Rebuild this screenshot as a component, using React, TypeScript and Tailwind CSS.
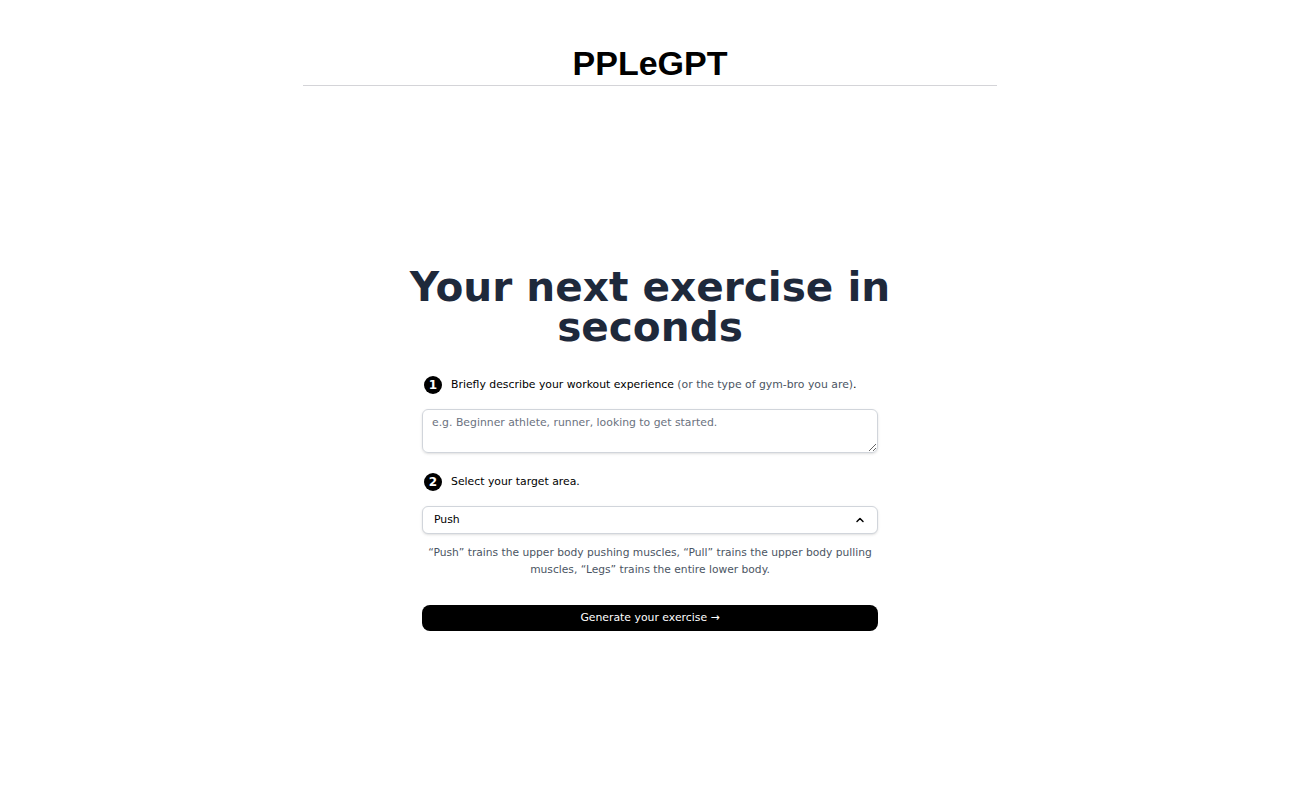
export default function App() {
  return (
    <div className="min-h-[788px] bg-white font-['DejaVu_Sans',sans-serif] text-black">
      <header className="mx-auto flex h-[86px] w-[694px] justify-center border-b border-[#d4d4d8] pt-[43px]">
        <h1 className="font-['Liberation_Sans',Arial,sans-serif] text-[34px] font-bold leading-[40px]">PPLeGPT</h1>
      </header>

      <main className="mx-auto flex w-[500px] flex-col items-center">
        <h2 className="mt-[181px] text-center text-[40.6px] font-bold leading-[40px] text-[#1e293b]">
          Your next exercise in seconds
        </h2>

        <div className="mt-[29px] w-[456px]">
          <div className="ml-[2px] flex items-center gap-[9px]">
            <span className="flex h-[18px] w-[18px] items-center justify-center rounded-full bg-black text-[12px] font-bold leading-none text-white">
              1
            </span>
            <p className="text-[10.85px] leading-[16px]">
              Briefly describe your workout experience{" "}
              <span className="text-[#4b5563]">(or the type of gym-bro you are)</span>.
            </p>
          </div>

          <textarea
            rows={2}
            placeholder="e.g. Beginner athlete, runner, looking to get started."
            className="mt-[15px] block h-[44px] w-full rounded-md border border-[#d1d5db] px-[9px] pt-[5px] text-[10.85px] leading-[16px] shadow-sm outline-none placeholder:text-[#6b7280]"
          />

          <div className="ml-[2px] mt-[20px] flex items-center gap-[9px]">
            <span className="flex h-[18px] w-[18px] items-center justify-center rounded-full bg-black text-[12px] font-bold leading-none text-white">
              2
            </span>
            <p className="text-[10.85px] leading-[16px]">Select your target area.</p>
          </div>

          <button className="mt-[15px] flex h-[28px] w-full items-center justify-between rounded-md border border-[#d1d5db] bg-white pl-[11px] pr-[12px] text-[10.85px] shadow-sm">
            <span>Push</span>
            <svg width="10" height="10" viewBox="0 0 10 10" fill="none">
              <path d="M2 6.5 L5 3.5 L8 6.5" stroke="black" strokeWidth="1.5" strokeLinecap="round" strokeLinejoin="round" />
            </svg>
          </button>

          <p className="-mx-[4px] mt-[10px] text-center text-[10.7px] leading-[17px] text-[#4b5563]">
            “Push” trains the upper body pushing muscles, “Pull” trains the upper body pulling muscles, “Legs” trains the entire lower body.
          </p>

          <button className="mt-[27px] flex h-[26px] w-full items-center justify-center rounded-lg bg-black text-[10.85px] text-white">
            Generate your exercise →
          </button>
        </div>
      </main>
    </div>
  );
}
